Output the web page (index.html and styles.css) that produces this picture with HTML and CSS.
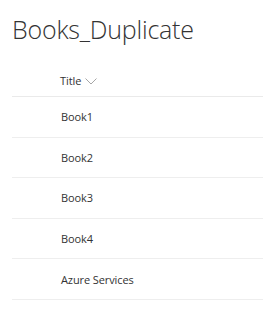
FILE: index.html
```html
<!DOCTYPE html>
<html lang="en">
<head>
    <meta charset="UTF-8">
    <title>Books_Duplicate</title>
    <link rel="stylesheet" href="styles.css">
</head>
<body>
    <h1 class="list-title">Books_Duplicate</h1>

    <div class="list">
        <!-- Column header -->
        <div class="list-header">
            <span class="col-title">Title</span>
            <svg class="chevron" width="12" height="7" viewBox="0 0 12 7">
                <path d="M0.5 0.5 L6 6 L11.5 0.5" fill="none" stroke="#a6a6a6" stroke-width="1"/>
            </svg>
        </div>

        <!-- Items -->
        <div class="list-row">Book1</div>
        <div class="list-row">Book2</div>
        <div class="list-row">Book3</div>
        <div class="list-row">Book4</div>
        <div class="list-row">Azure Services</div>
    </div>
</body>
</html>
```

FILE: styles.css
```css
* {
    margin: 0;
    padding: 0;
    box-sizing: border-box;
}
body {
    font-family: 'Open Sans', sans-serif;
    background-color: #fff;
    color: #333;
}

.list-title {
    font-size: 25px;
    font-weight: 300;
    color: #333;
    padding: 13px 0 0 12px;
    line-height: 32px;
    letter-spacing: -0.2px;
}

.list {
    margin: 20px 0 0 12px;
}

.list-header {
    display: flex;
    align-items: center;
    gap: 4px;
    height: 32px;
    padding-left: 48px;
    border-bottom: 1px solid #eaeaea;
    font-size: 11px;
    color: #333;
    letter-spacing: -0.1px;
}
.chevron {
    margin-top: 1px;
}

.list-row {
    display: flex;
    align-items: center;
    height: 40.6px;
    padding-left: 49px;
    border-bottom: 1px solid #eeeeee;
    font-size: 11px;
    color: #333;
    letter-spacing: -0.1px;
}
```
